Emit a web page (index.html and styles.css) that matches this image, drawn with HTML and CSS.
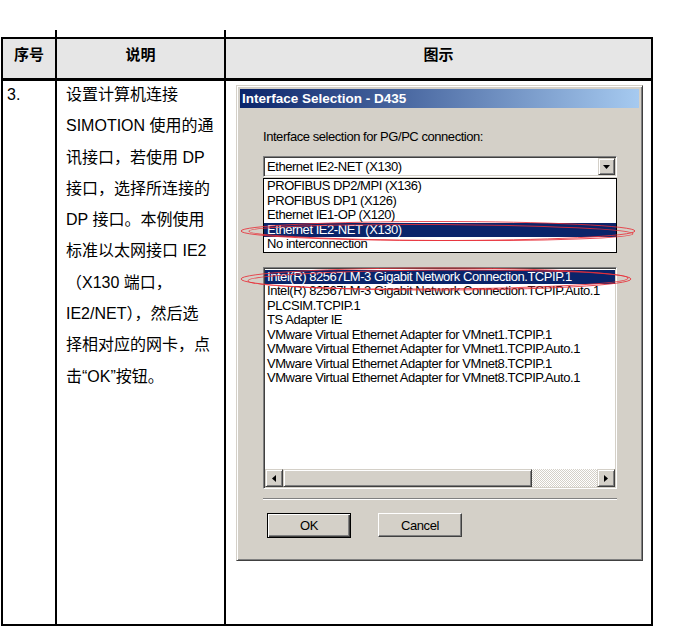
FILE: index.html
```html
<!DOCTYPE html>
<html lang="zh-CN">
<head>
  <meta charset="UTF-8">
  <meta name="viewport" content="width=device-width, initial-scale=1.0">
  <title>设置通讯接口</title>
  <link rel="stylesheet" href="styles.css">
</head>
<body>
  <div class="stubs"><span></span><span></span><span></span></div>
  <div class="sheet">
    <div class="cell head">序号</div>
    <div class="cell head">说明</div>
    <div class="cell head">图示</div>

    <div class="cell step"><p>3.</p></div>
    <div class="cell desc">
      <p>设置计算机连接<br>SIMOTION 使用的通<br>讯接口，若使用 DP<br>接口，选择所连接的<br>DP 接口。本例使用<br>标准以太网接口 IE2<br>（X130 端口，<br>IE2/NET），然后选<br>择相对应的网卡，点<br>击“OK”按钮。</p>
    </div>
    <div class="cell figure">
      <div class="dialog">
        <div class="titlebar">Interface Selection - D435</div>
        <div class="dlg-body">
          <div class="label">Interface selection for PG/PC connection:</div>

          <div class="combo">
            <div class="combo-field">
              <span class="combo-text">Ethernet IE2-NET (X130)</span>
              <span class="raised drop-btn">
                <svg width="7" height="4" viewBox="0 0 7 4"><polygon points="0,0 7,0 3.5,4" fill="#000"/></svg>
              </span>
            </div>
            <ul class="dropdown">
              <li>PROFIBUS DP2/MPI (X136)</li>
              <li>PROFIBUS DP1 (X126)</li>
              <li>Ethernet IE1-OP (X120)</li>
              <li class="sel">Ethernet IE2-NET (X130)</li>
              <li>No interconnection</li>
            </ul>
          </div>

          <div class="listbox">
            <ul class="items">
              <li class="sel">Intel(R) 82567LM-3 Gigabit Network Connection.TCPIP.1</li>
              <li>Intel(R) 82567LM-3 Gigabit Network Connection.TCPIP.Auto.1</li>
              <li>PLCSIM.TCPIP.1</li>
              <li>TS Adapter IE</li>
              <li>VMware Virtual Ethernet Adapter for VMnet1.TCPIP.1</li>
              <li>VMware Virtual Ethernet Adapter for VMnet1.TCPIP.Auto.1</li>
              <li>VMware Virtual Ethernet Adapter for VMnet8.TCPIP.1</li>
              <li>VMware Virtual Ethernet Adapter for VMnet8.TCPIP.Auto.1</li>
            </ul>
            <div class="hscroll">
              <span class="raised sb-btn">
                <svg width="4" height="7" viewBox="0 0 4 7"><polygon points="4,0 4,7 0,3.5" fill="#000"/></svg>
              </span>
              <span class="raised thumb"></span>
              <span class="track"></span>
              <span class="raised sb-btn">
                <svg width="4" height="7" viewBox="0 0 4 7"><polygon points="0,0 0,7 4,3.5" fill="#000"/></svg>
              </span>
            </div>
          </div>

          <div class="sep"></div>

          <div class="buttons">
            <button class="btn default">OK</button>
            <button class="btn">Cancel</button>
          </div>
        </div>

        <!-- red hand-drawn marks over the selected rows -->
        <svg class="marks" width="407" height="476" viewBox="0 0 407 476">
          <ellipse cx="201" cy="145" rx="197" ry="9.5" />
          <ellipse cx="204" cy="146.5" rx="192" ry="8" transform="rotate(0.4 204 146)" />
          <ellipse cx="199" cy="193" rx="195" ry="11" />
          <ellipse cx="201" cy="193.5" rx="190" ry="9.5" transform="rotate(-0.4 201 193)" />
        </svg>
      </div>
    </div>
  </div>
</body>
</html>
```

FILE: styles.css
```css
body {
  margin: 0;
  padding: 30px 0 0 1px;
  background: #fff;
  color: #000;
  font-family: "Liberation Sans", "Noto Sans CJK SC", sans-serif;
}

p {
  margin: 0;
}

/* short lines left over from the table on the previous page */
.stubs {
  display: grid;
  grid-template-columns: 54px 169px 427px;
  height: 7px;
  margin-left: 2px;
}

.stubs span:nth-child(-n+2) {
  border-right: 2px solid #000;
}

.sheet {
  display: grid;
  grid-template-columns: 54px 169px 427px;
  grid-template-rows: 42px 545px;
  width: 650px;
  border-left: 2px solid #000;
  border-top: 2px solid #000;
}

.cell {
  box-sizing: border-box;
  border-right: 2px solid #000;
  border-bottom: 2px solid #000;
}

.head {
  background: #e6e6e6;
  border-bottom-width: 3px;
  text-align: center;
  font-size: 15px;
  font-weight: bold;
  line-height: 31px;
}

.step {
  padding-left: 4px;
  font-size: 16px;
}

.desc {
  padding-left: 9px;
  font-size: 16px;
}

.step p,
.desc p {
  margin-top: -2px;
  line-height: 31.3px;
  white-space: nowrap;
}

.figure {
  padding: 4px 0 0 10px;
}

/* ---- windows classic dialog ---- */

.dialog {
  position: relative;
  box-sizing: border-box;
  width: 407px;
  height: 476px;
  padding: 3px;
  background: #d4d0c8;
  border: 1px solid;
  border-color: #d4d0c8 #404040 #404040 #d4d0c8;
  box-shadow: inset 1px 1px #fff, inset -1px -1px #808080;
  font-family: "Liberation Sans", sans-serif;
  font-size: 13px;
  letter-spacing: -0.45px;
}

.titlebar {
  height: 19px;
  padding-left: 2px;
  line-height: 19px;
  color: #fff;
  font-size: 13.5px;
  font-weight: bold;
  letter-spacing: 0;
  background: linear-gradient(to right, #0a246a, #a6caf0);
}

.dlg-body {
  padding: 0 22px 0 23px;
}

.label {
  margin-top: 21px;
  line-height: 16px;
}

.raised {
  box-sizing: border-box;
  display: flex;
  align-items: center;
  justify-content: center;
  background: #d4d0c8;
  border: 1px solid;
  border-color: #d4d0c8 #404040 #404040 #d4d0c8;
  box-shadow: inset 1px 1px #fff, inset -1px -1px #808080;
}

.combo {
  position: relative;
  margin-top: 11px;
}

.combo-field,
.listbox {
  box-sizing: border-box;
  background: #fff;
  border: 1px solid;
  border-color: #808080 #fff #fff #808080;
  box-shadow: inset 1px 1px #404040, inset -1px -1px #d4d0c8;
  padding: 1px;
}

.combo-field {
  display: flex;
  align-items: center;
  height: 21px;
}

.combo-text {
  flex: 1;
  padding-left: 2px;
  line-height: 17px;
}

.drop-btn {
  width: 17px;
  height: 17px;
}

ul {
  list-style: none;
  margin: 0;
  padding: 0;
}

li {
  white-space: nowrap;
}

.dropdown {
  position: absolute;
  top: 22px;
  left: 0;
  z-index: 1;
  box-sizing: border-box;
  width: 354px;
  border: 1px solid #000;
  background: #fff;
}

.dropdown li {
  height: 14.6px;
  padding-left: 3px;
  line-height: 14.6px;
}

.sel {
  background: #0a246a;
  color: #fff;
}

.listbox {
  display: flex;
  flex-direction: column;
  margin-top: 90px;
  height: 222px;
}

.items {
  flex: 1;
  padding-top: 1px;
}

.items li {
  height: 14.45px;
  padding-left: 2px;
  line-height: 14.45px;
}

.hscroll {
  display: flex;
  height: 18px;
}

.sb-btn {
  width: 18px;
}

.thumb {
  width: 249px;
}

.track {
  flex: 1;
  background-image: repeating-conic-gradient(#d4d0c8 0 25%, #fff 0 50%);
  background-size: 2px 2px;
}

.sep {
  margin-top: 9px;
  border-top: 1px solid #808080;
  border-bottom: 1px solid #fff;
}

.buttons {
  display: flex;
  align-items: flex-start;
  gap: 27px;
  margin-top: 13px;
  padding-left: 4px;
}

.btn {
  box-sizing: border-box;
  width: 84px;
  height: 24px;
  padding: 0;
  background: #d4d0c8;
  color: #000;
  font: inherit;
  letter-spacing: inherit;
  border: 1px solid;
  border-color: #fff #404040 #404040 #fff;
  box-shadow: inset -1px -1px #808080;
}

.btn.default {
  height: 25px;
  border-color: #000;
  box-shadow: inset 1px 1px #fff, inset -1px -1px #404040, inset -2px -2px #808080;
}

.marks {
  position: absolute;
  left: 0;
  top: 0;
  overflow: visible;
  pointer-events: none;
  z-index: 2;
}

.marks ellipse {
  fill: none;
  stroke: #e8303a;
  stroke-width: 1;
  opacity: 0.85;
}
```
